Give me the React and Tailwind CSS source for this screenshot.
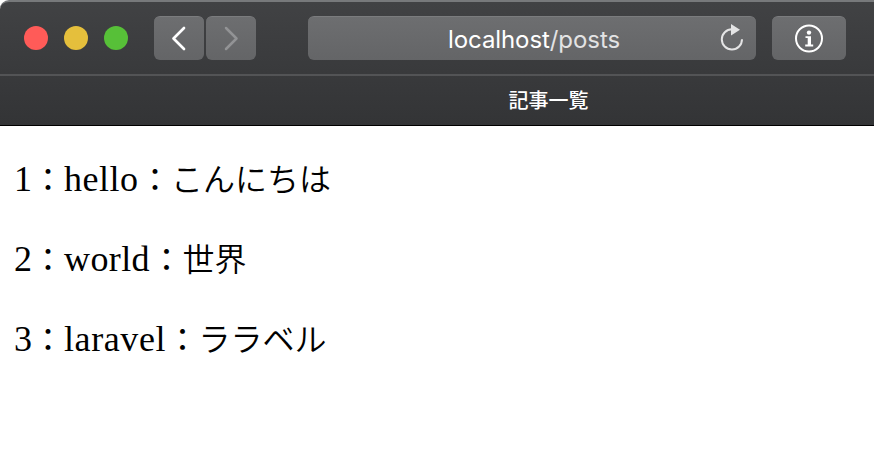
import React from "react";

const posts = [
  { id: 1, title: "hello", body: "こんにちは", spacing: "w-[75px] tracking-[0.5px]" },
  { id: 2, title: "world", body: "世界", spacing: "w-[86.5px] tracking-[0.4px]" },
  { id: 3, title: "laravel", body: "ララベル", spacing: "w-[102.5px] tracking-[0.6px]" },
];

const buttonStyle =
  "flex h-11 items-center justify-center rounded-[6px] border-t border-[#7b7c7e] bg-linear-to-b from-[#6d6e70] to-[#646567]";

const Toolbar = () => (
  <div className="flex h-[72px] items-start pt-[14px] pl-6">
    <div className="flex h-11 items-center gap-4">
      <span className="size-6 rounded-full bg-[#ff5b58]" />
      <span className="size-6 rounded-full bg-[#e5bf3c]" />
      <span className="size-6 rounded-full bg-[#57c038]" />
    </div>

    <div className="ml-[26px] flex gap-[2px]">
      <button className={`${buttonStyle} w-[50px]`}>
        <svg width="50" height="44" viewBox="0 0 50 44" fill="none" stroke="#fff" strokeWidth="2.7" strokeLinecap="round" strokeLinejoin="round">
          <path d="M30 11 19.5 21.5 30 32" />
        </svg>
      </button>
      <button className={`${buttonStyle} w-[50px]`}>
        <svg width="50" height="44" viewBox="0 0 50 44" fill="none" stroke="#929395" strokeWidth="2.5" strokeLinecap="round" strokeLinejoin="round">
          <path d="M20 11 30.5 21.5 20 32" />
        </svg>
      </button>
    </div>

    <div className={`${buttonStyle} relative ml-[52px] w-[448px]`}>
      <p className="pl-1 pt-[2px] font-['Inter',sans-serif] text-[24px] leading-[44px] tracking-[-0.08px] text-white">
        localhost<span className="text-[#e3e3e4]">/posts</span>
      </p>
      <svg className="absolute top-[6px] right-[10px]" width="28" height="30" viewBox="0 0 28 30" fill="none">
        <path d="M14 6.3A10.1 10.1 0 1 0 24 16.3" stroke="#e4e4e5" strokeWidth="2" />
        <path d="M13 1 22 6.8 13 12.5Z" fill="#e4e4e5" />
      </svg>
    </div>

    <button className={`${buttonStyle} ml-4 w-[74px]`}>
      <svg width="30" height="30" viewBox="0 0 30 30">
        <circle cx="15" cy="14.5" r="13" fill="none" stroke="#fff" strokeWidth="2" />
        <circle cx="15" cy="8.6" r="2.2" fill="#fff" />
        <path d="M11.5 12.2h5.5v8.4h2.2v1.8h-8v-1.8h2.5V14h-2.2Z" fill="#fff" />
      </svg>
    </button>
  </div>
);

export default function App() {
  return (
    <div className="h-[450px] w-[874px] overflow-hidden bg-white">
      <header className="h-[126px] overflow-hidden rounded-tl-[9px] border-t-2 border-b border-t-[#77797b] border-b-black bg-linear-to-b from-[#414244] to-[#333436]">
        <Toolbar />
        <div className="flex h-[51px] justify-center border-t-2 border-[#535456] pl-[223px] font-['Noto_Sans_CJK_JP',sans-serif] text-[20px] leading-[48px] font-medium text-white">
          記事一覧
        </div>
      </header>

      <main className="flex flex-col gap-8 pt-[29px] pl-[14px] text-black">
        {posts.map((post) => (
          <p key={post.id} className="flex h-12 items-baseline font-['Liberation_Serif','Noto_Sans_CJK_JP',serif] text-[32px] leading-[48px] whitespace-nowrap">
            <span className="w-[18px] text-[36px]">{post.id}</span>
            <span className="w-8">：</span>
            <span className={`${post.spacing} text-[36px]`}>{post.title}</span>
            <span>
              ：<span className="font-[350]">{post.body}</span>
            </span>
          </p>
        ))}
      </main>
    </div>
  );
}
